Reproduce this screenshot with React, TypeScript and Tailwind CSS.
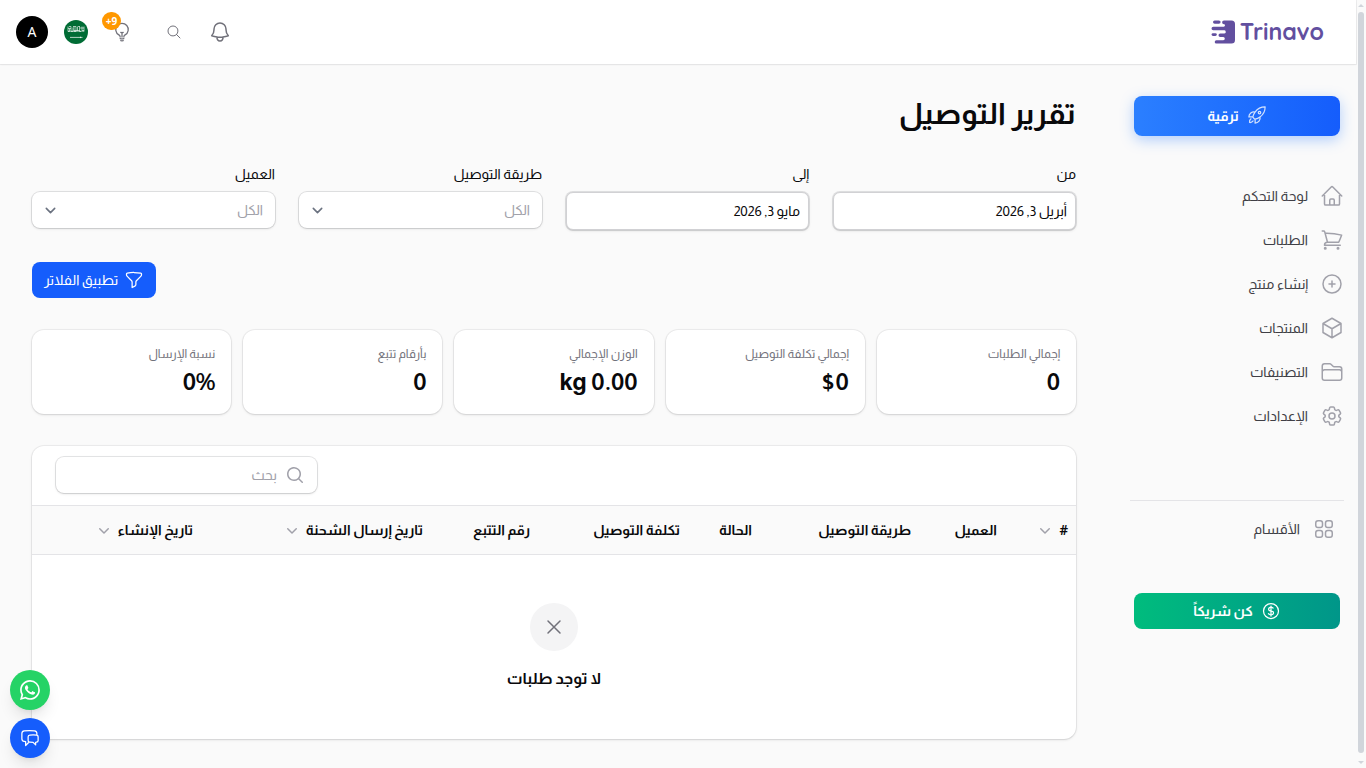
import React from 'react';
import {
    HiMiniChevronDown,
    HiMiniMagnifyingGlass,
    HiOutlineBell,
    HiOutlineChatBubbleLeftRight,
    HiOutlineCog6Tooth,
    HiOutlineCube,
    HiOutlineCurrencyDollar,
    HiOutlineFolder,
    HiOutlineFunnel,
    HiOutlineHome,
    HiOutlineLightBulb,
    HiOutlineMagnifyingGlass,
    HiOutlinePlusCircle,
    HiOutlineRocketLaunch,
    HiOutlineShoppingCart,
    HiOutlineSquares2X2,
    HiOutlineXMark,
} from 'react-icons/hi2';
import { BsWhatsapp } from 'react-icons/bs';

const navItems = [
    { label: 'لوحة التحكم', icon: HiOutlineHome },
    { label: 'الطلبات', icon: HiOutlineShoppingCart },
    { label: 'إنشاء منتج', icon: HiOutlinePlusCircle },
    { label: 'المنتجات', icon: HiOutlineCube },
    { label: 'التصنيفات', icon: HiOutlineFolder },
    { label: 'الإعدادات', icon: HiOutlineCog6Tooth },
];

const stats = [
    { label: 'إجمالي الطلبات', value: '0' },
    { label: 'إجمالي تكلفة التوصيل', value: '$0' },
    { label: 'الوزن الإجمالي', value: 'kg 0.00' },
    { label: 'بأرقام تتبع', value: '0' },
    { label: 'نسبة الإرسال', value: '0%' },
];

const columns = [
    { label: '#', sortable: true },
    { label: 'العميل' },
    { label: 'طريقة التوصيل' },
    { label: 'الحالة' },
    { label: 'تكلفة التوصيل' },
    { label: 'رقم التتبع' },
    { label: 'تاريخ إرسال الشحنة', sortable: true },
    { label: 'تاريخ الإنشاء', sortable: true },
];

const Logo = () => (
    <div dir="ltr" className="flex items-center gap-[5px] text-[#624f9f]">
        <svg className="h-6 w-6" viewBox="0 0 24 24" fill="currentColor">
            <rect x="2" y="0.4" width="7.6" height="3.4" rx="1.7" />
            <rect x="0.6" y="13.2" width="5.2" height="2.8" rx="1.4" />
            <path d="M13 .4H20.500a3.500 3.500 0 013.500 3.500v16.200a3.500 3.500 0 01-3.500 3.500H5.400a1.700 1.700 0 010-3.400h6.800a1.600 1.600 0 001.600-1.700 1.600 1.600 0 00-1.600-1.600H9.200a1.700 1.700 0 010-3.400h4a1.500 1.500 0 001.500-1.900 1.500 1.500 0 00-1.500-1.300H2.300a1.800 1.800 0 010-3.600h10.200a1.400 1.400 0 001.500-1.400 1 1 0 00-1-1.100 1.900 1.900 0 010-3.800z" />
        </svg>
        <span className="font-['Quicksand','Nunito',sans-serif] text-[23.2px] leading-none font-bold">Trinavo</span>
    </div>
);

const Flag = () => (
    <svg className="h-6 w-6 rounded-full" viewBox="0 0 24 24">
        <rect width="24" height="24" fill="#006c35" />
        <path
            d="M4 6.500v5h1.500v-3m1.500-2v5h2v-4m1-1v5h2v-5m1.500 0v4h2m0-4v5h1.500m1-5v4h2m0-4v5M4 8.500h3m3 2h4m2-2.500h4M4 11.200h16M5 6.500h2m2 0h3m2 0h2"
            fill="none"
            stroke="#fff"
            strokeWidth="0.700"
            opacity="0.850"
        />
        <path d="M6 17.400h12.500M16.500 16.700v1.400" stroke="#fff" strokeWidth="0.700" />
    </svg>
);

const Header = () => (
    <header className="flex h-16 items-center justify-between bg-white pr-8 pl-4 shadow-xs ring-1 ring-gray-950/5">
        <Logo />
        <div className="flex items-center text-[#71717a]">
            <HiOutlineBell className="h-6 w-6" />
            <HiOutlineMagnifyingGlass className="mr-[26px] h-4 w-4" />
            <div className="relative mr-[34px]">
                <HiOutlineLightBulb className="h-5 w-5" />
                <span dir="ltr" className="absolute -top-2.5 -left-2.5 flex h-[18px] w-[19px] items-center justify-center rounded-full bg-[#ff9800] font-['Noto_Sans',sans-serif] text-[10px] font-bold text-white">
                    +9
                </span>
            </div>
            <div className="mr-6">
                <Flag />
            </div>
            <div className="mr-4 flex h-8 w-8 items-center justify-center rounded-full bg-black pb-0.5 font-['Noto_Sans',sans-serif] text-[14px] text-white">A</div>
        </div>
    </header>
);

const Sidebar = () => (
    <aside className="w-[248px] shrink-0 pt-8">
        <button className="mr-4 flex h-10 w-[206px] items-center justify-center gap-2 rounded-lg bg-gradient-to-r from-[#2b7fff] to-[#155dfc] text-sm font-bold text-white shadow-[0_4px_14px_rgba(43,127,255,0.35)]">
            <HiOutlineRocketLaunch className="-mt-[3px] h-5 w-5 opacity-80" />
            ترقية
        </button>
        <nav className="mt-[38px] flex flex-col pr-3">
            {navItems.map(({ label, icon: Icon }) => (
                <a key={label} className="flex h-11 items-center gap-3 text-sm text-[#3f3f46]">
                    <Icon className="h-6 w-6 text-[#a1a1aa]" />
                    {label}
                </a>
            ))}
        </nav>
        <div className="mt-[62px] mr-3 w-[214px] border-t border-[#e4e4e7] pt-4 pr-2">
            <a className="flex h-6 items-center gap-3 text-sm text-[#3f3f46]">
                <HiOutlineSquares2X2 className="h-6 w-6 text-[#a1a1aa]" />
                الأقسام
            </a>
        </div>
        <button className="mt-[52px] mr-4 flex h-9 w-[206px] items-center justify-center gap-2 rounded-lg bg-gradient-to-r from-[#00bc7d] to-[#009689] text-sm font-bold text-white">
            <HiOutlineCurrencyDollar className="h-5 w-5" />
            كن شريكاً
        </button>
    </aside>
);

const DateField = ({ label, value }: { label: string; value: string }) => (
    <div>
        <label className="block text-sm leading-6">{label}</label>
        <div className="mt-1.5 flex h-[38px] items-center rounded-[7px] border border-[#d1d1d4] bg-white px-2 text-sm ring-1 shadow-sm ring-gray-950/10">{value}</div>
    </div>
);

const SelectField = ({ label }: { label: string }) => (
    <div>
        <label className="block text-sm leading-6">{label}</label>
        <div className="mt-1.5 flex h-9 items-center justify-between rounded-lg bg-white pr-3 pl-2 text-sm text-[#a1a1aa] ring-1 shadow-sm ring-gray-950/10">
            الكل
            <svg className="h-[21px] w-[21px]" viewBox="0 0 20 20" fill="none" stroke="#6b7280" strokeWidth="1.500" strokeLinecap="round" strokeLinejoin="round">
                <path d="M6 8l4 4 4-4" />
            </svg>
        </div>
    </div>
);

const OrdersTable = () => (
    <section className="mt-8 overflow-hidden rounded-xl bg-white shadow-sm ring-1 ring-gray-950/5">
        <div className="flex h-[60px] justify-end border-b border-[#e4e4e7] pt-[11px] pl-6">
            <div className="flex h-9 w-[261px] items-center gap-2 rounded-lg pr-3 text-sm text-[#a1a1aa] ring-1 shadow-sm ring-gray-950/10">
                <HiMiniMagnifyingGlass className="h-5 w-5" />
                بحث
            </div>
        </div>
        <div className="grid h-[49px] grid-cols-[71px_86px_159px_72px_150px_107px_230px_1fr] items-center border-b border-[#e4e4e7] bg-[#fafafa] pr-2 text-sm font-bold">
            {columns.map(c => (
                <div key={c.label} className="flex items-center gap-1 whitespace-nowrap">
                    {c.label}
                    {c.sortable && <HiMiniChevronDown className="h-5 w-5 text-[#a1a1aa]" />}
                </div>
            ))}
        </div>
        <div className="flex flex-col items-center py-12">
            <div className="flex h-12 w-12 items-center justify-center rounded-full bg-[#f4f4f5]">
                <HiOutlineXMark className="h-6 w-6 text-[#71717a]" />
            </div>
            <h4 className="mt-4 text-base leading-6 font-bold">لا توجد طلبات</h4>
        </div>
    </section>
);

export default function App() {
    return (
        <div dir="rtl" className="relative flex h-screen overflow-hidden bg-[#fafafa] font-['Almarai',sans-serif] text-[#09090b]">
            {/* Scrollbar */}
            <div className="flex w-2.5 shrink-0 flex-col items-center">
                <div className="mt-1 border-x-[3px] border-b-[3px] border-x-transparent border-b-[#d1d5db]" />
                <div className="mt-[5px] h-[741px] w-1.5 rounded-full bg-[#d1d5db]" />
                <div className="mt-2 border-x-[3px] border-t-[3px] border-x-transparent border-t-[#d1d5db]" />
            </div>

            <div className="min-w-0 flex-1">
                <Header />
                <div className="flex">
                    <Sidebar />
                    <main className="min-w-0 flex-1 px-8 pt-8">
                        <h1 className="text-3xl leading-9 font-bold">تقرير التوصيل</h1>
                        <div className="mt-[30px] grid grid-cols-4 gap-6">
                            <DateField label="من" value="أبريل 3, 2026" />
                            <DateField label="إلى" value="مايو 3, 2026" />
                            <SelectField label="طريقة التوصيل" />
                            <SelectField label="العميل" />
                        </div>
                        <div className="mt-8 flex justify-end">
                            <button className="flex h-9 items-center gap-1.5 rounded-lg bg-[#155dfc] px-3 text-sm text-white">
                                <HiOutlineFunnel className="h-5 w-5" />
                                تطبيق الفلاتر
                            </button>
                        </div>
                        <div className="mt-8 grid grid-cols-5 gap-3">
                            {stats.map(s => (
                                <div key={s.label} className="rounded-xl bg-white p-4 shadow-sm ring-1 ring-gray-950/5">
                                    <p className="text-xs text-[#71717a]">{s.label}</p>
                                    <p dir="ltr" className="mt-1 text-right text-2xl leading-8 font-bold">
                                        {s.value}
                                    </p>
                                </div>
                            ))}
                        </div>
                        <OrdersTable />
                    </main>
                </div>
            </div>

            {/* Floating contact buttons */}
            <div className="absolute bottom-2.5 left-2.5 flex flex-col gap-2 text-white">
                <button className="flex h-10 w-10 items-center justify-center rounded-full bg-[#25d366] shadow-lg">
                    <BsWhatsapp className="h-5 w-5" />
                </button>
                <button className="flex h-10 w-10 items-center justify-center rounded-full bg-[#155dfc] shadow-lg">
                    <HiOutlineChatBubbleLeftRight className="h-5 w-5" />
                </button>
            </div>
        </div>
    );
}
